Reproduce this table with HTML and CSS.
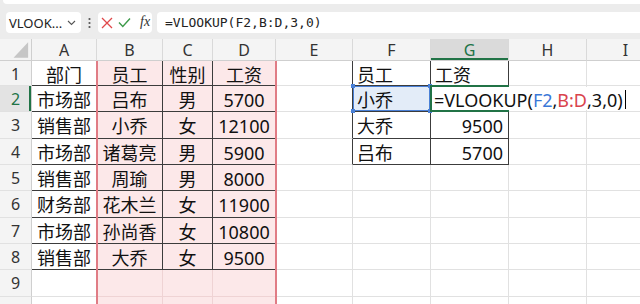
FILE: index.html
```html
<!DOCTYPE html>
<html lang="zh-CN">
<head>
    <meta charset="UTF-8">
    <meta name="viewport" content="width=device-width, initial-scale=1.0">
    <title>VLOOKUP</title>
    <link rel="stylesheet" href="styles.css">
</head>
<body>
    <div class="ribbon"></div>
    <div class="formula-bar">
        <div class="name-box">
            <span>VLOOK...</span>
            <svg width="9" height="6" viewBox="0 0 9 6"><path d="M1 1 L4.5 4.5 L8 1" fill="none" stroke="#555" stroke-width="1.1"/></svg>
        </div>
        <div class="grip">
            <svg width="3" height="12" viewBox="0 0 3 12"><circle cx="1.5" cy="2" r="1.1" fill="#555"/><circle cx="1.5" cy="6" r="1.1" fill="#555"/><circle cx="1.5" cy="10" r="1.1" fill="#555"/></svg>
        </div>
        <div class="fx-buttons">
            <svg class="btn-x" width="12" height="12" viewBox="0 0 12 12"><path d="M1 1 L11 11 M11 1 L1 11" stroke="#e0484a" stroke-width="1.3"/></svg>
            <svg class="btn-ok" width="13" height="11" viewBox="0 0 13 11"><path d="M1 5.5 L4.8 9.5 L12 1.5" fill="none" stroke="#3d9a4a" stroke-width="1.4"/></svg>
            <span class="fx">fx</span>
        </div>
        <div class="formula-input">=VLOOKUP(F2,B:D,3,0)</div>
    </div>
    <div class="sheet" id="sheet">
        <div class="range-ref"></div>
    </div>
    <script>
        const letters = ['A', 'B', 'C', 'D', 'E', 'F', 'G', 'H', 'I'];
        const staff = [
            ['部门', '员工', '性别', '工资'],
            ['市场部', '吕布', '男', '5700'],
            ['销售部', '小乔', '女', '12100'],
            ['市场部', '诸葛亮', '男', '5900'],
            ['销售部', '周瑜', '男', '8000'],
            ['财务部', '花木兰', '女', '11900'],
            ['市场部', '孙尚香', '女', '10800'],
            ['销售部', '大乔', '女', '9500']
        ];
        const lookup = [
            ['员工', '工资'],
            ['小乔', null],
            ['大乔', '9500'],
            ['吕布', '5700']
        ];
        const sheet = document.getElementById('sheet');

        function cell(cls, text) {
            let d = document.createElement('div');
            d.className = 'cell ' + cls;
            if (text) d.textContent = text;
            sheet.appendChild(d);
            return d;
        }

        let corner = cell('corner');
        corner.innerHTML = '<svg width="32" height="22" viewBox="0 0 32 22"><path d="M29 3 V19 H14 Z" fill="#c6c6c6"/></svg>';
        letters.forEach(l => cell(l === 'G' ? 'col-head active' : 'col-head', l));

        for (let r = 1; r <= 10; r++) {
            cell(r === 2 ? 'row-head active' : 'row-head', String(r));
            for (let c = 0; c < letters.length; c++) {
                let cls = [];
                let text = null;
                if (c <= 3 && r <= 8) {
                    text = staff[r - 1][c];
                    cls.push('boxed', 'center');
                }
                if (c >= 1 && c <= 3) cls.push('ref');
                if (c === 4 && r <= 4) cls.push('edge');
                if ((c === 5 || c === 6) && r <= 4) {
                    cls.push('boxed');
                    text = lookup[r - 1][c - 5];
                    if (c === 6 && r > 2) cls.push('right');
                }
                let d = cell(cls.join(' '), text);
                if (c === 5 && r === 2) {
                    d.classList.add('lookup-ref');
                    d.insertAdjacentHTML('beforeend', '<i class="h tl"></i><i class="h tr"></i><i class="h bl"></i><i class="h br"></i>');
                }
                if (c === 6 && r === 2) {
                    d.classList.add('editing');
                    d.innerHTML = '<span class="editor">=VLOOKUP(<span class="ref-blue">F2</span>,<span class="ref-red">B:D</span>,3,0)<span class="caret"></span></span>';
                }
            }
        }
    </script>
</body>
</html>
```

FILE: styles.css
```css
body {
    margin: 0;
    width: 640px;
    height: 304px;
    overflow: hidden;
    background: #ececec;
    font-family: "Noto Sans", "Noto Sans CJK SC", sans-serif;
}
.ribbon {
    height: 4px;
    margin-left: 3px;
    background: #fff;
    border-radius: 0 0 0 6px;
}
.formula-bar {
    display: flex;
    align-items: center;
    height: 21px;
    margin: 8px 0 6px 6px;
}
.name-box {
    width: 75px;
    height: 21px;
    box-sizing: border-box;
    padding: 0 5px 0 3px;
    background: #fff;
    border-radius: 4px;
    display: flex;
    align-items: center;
    justify-content: space-between;
    font-size: 13px;
    color: #222;
}
.grip {
    width: 17px;
    display: flex;
    justify-content: center;
}
.fx-buttons {
    width: 54px;
    height: 21px;
    box-sizing: border-box;
    padding-left: 3px;
    background: #fff;
    border-radius: 4px;
    display: flex;
    align-items: center;
}
.btn-ok {
    margin-left: 5px;
}
.fx {
    margin: -2px 0 0 9px;
    font: italic 14px "Liberation Serif", serif;
    color: #333;
}
.formula-input {
    flex: 1;
    height: 21px;
    margin-left: 5px;
    padding-left: 8px;
    background: #fff;
    border-radius: 4px 0 0 4px;
    font: 13px "DejaVu Sans Mono", monospace;
    line-height: 21px;
    color: #222;
}

/* grid */
.sheet {
    position: relative;
    display: grid;
    grid-template-columns: 32px 65px 66px 50px 63px 77px 78px 78px 78px 78px;
    grid-template-rows: 22px 25px repeat(9, 26.33px);
    background: #fff;
}
.cell {
    box-sizing: border-box;
    display: flex;
    align-items: center;
    padding: 3px 3px 0 4px;
    border-right: 1px solid #e1e1e1;
    border-bottom: 1px solid #e1e1e1;
    font-size: 18px;
    line-height: 1;
    color: #111;
    white-space: nowrap;
    overflow: hidden;
}
.corner {
    padding: 0;
    background: #f4f4f4;
    border-right: 1px solid #cfcfcf;
    border-bottom: 1px solid #cfcfcf;
}
.col-head, .row-head {
    justify-content: center;
    padding: 1px 0 0;
    background: #f4f4f4;
    font-size: 16px;
    color: #333;
}
.col-head {
    border-right-color: #d9d9d9;
    border-bottom-color: #cfcfcf;
}
.row-head {
    border-right-color: #cfcfcf;
}
.col-head.active {
    background: #dadada;
    color: #217346;
    box-shadow: inset 0 -2px 0 #217346;
}
.row-head.active {
    background: #e3e3e3;
    color: #217346;
    box-shadow: inset -2px 0 0 #217346;
}
.center {
    justify-content: center;
    padding-left: 0;
    padding-right: 0;
}
.right {
    justify-content: flex-end;
    padding-right: 5px;
}
.ref {
    background: #fce8e9;
    border-color: #efd3d4;
}
.boxed {
    border-right-color: #3c3c3c;
    border-bottom-color: #3c3c3c;
}
.edge {
    border-right-color: #3c3c3c;
}

/* range references while editing */
.range-ref {
    position: absolute;
    left: 96px;
    top: 22px;
    bottom: 0;
    width: 181px;
    box-sizing: border-box;
    border-left: 2px solid #e07c85;
    border-right: 2px solid #e07c85;
    pointer-events: none;
    z-index: 3;
}
.lookup-ref {
    position: relative;
    overflow: visible;
    background: #e3ecf8;
    box-shadow: inset 0 0 0 1px #4a80d6;
}
.h {
    position: absolute;
    width: 4px;
    height: 4px;
    background: #4a80d6;
}
.tl { left: -2px; top: -2px; }
.tr { right: -2px; top: -2px; }
.bl { left: -2px; bottom: -2px; }
.br { right: -2px; bottom: -2px; }

.editing {
    position: relative;
    z-index: 2;
    overflow: visible;
    padding: 0;
    align-items: stretch;
}
.editing::before {
    content: "";
    position: absolute;
    left: -1px;
    top: -1px;
    right: -1px;
    bottom: -1px;
    border: 2px solid #217346;
}
.editor {
    position: relative;
    display: flex;
    align-items: center;
    margin: 1px 0 1px 2px;
    padding: 2px 2px 0 1px;
    background: #fff;
    color: #111;
}
.ref-blue {
    color: #3b78d8;
}
.ref-red {
    color: #d9434c;
}
.caret {
    width: 1px;
    height: 19px;
    margin-left: 2px;
    background: #000;
}
```
